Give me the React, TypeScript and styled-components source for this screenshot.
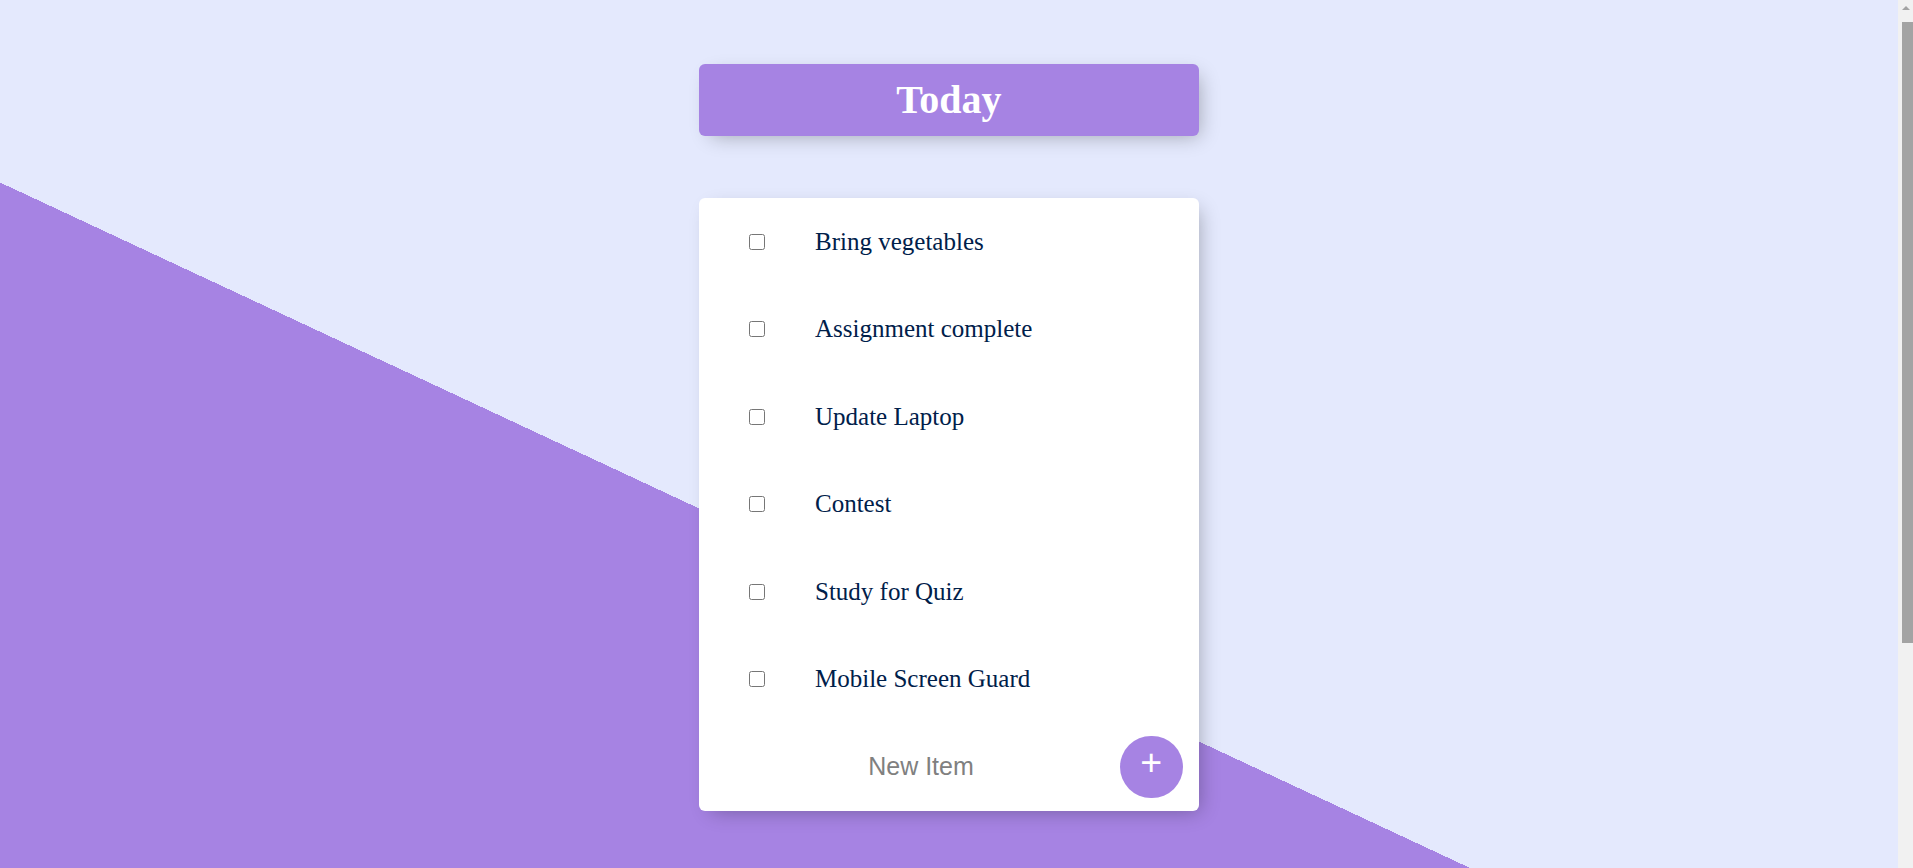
import React from 'react';
import styled, { createGlobalStyle } from 'styled-components';

const colors = {
    purple: '#A683E3',
    light: '#E4E9FD',
    ink: '#00204a',
    track: '#f1f1f1',
    thumb: '#a3a3a3',
};

const GlobalStyle = createGlobalStyle`
    html, body {
        margin: 0;
        padding: 0;
    }
    body {
        background: ${colors.light};
        padding-right: 15px;
    }
`;

const Page = styled.div`
    min-height: 1250px;
    display: flex;
    flex-direction: column;
    align-items: center;
    padding-top: 64px;
    box-sizing: border-box;
    background-image: linear-gradient(25deg, ${colors.purple} 50%, ${colors.light} 50%);
`;

const ScrollTrack = styled.div`
    position: fixed;
    top: 0;
    right: 0;
    width: 15px;
    height: 100vh;
    background: ${colors.track};
    display: flex;
    flex-direction: column;
    align-items: center;
`;

const ScrollArrow = styled.div`
    margin-top: 6px;
    width: 0;
    height: 0;
    border-left: 4px solid transparent;
    border-right: 4px solid transparent;
    border-bottom: 4px solid ${colors.thumb};
`;

const ScrollThumb = styled.div`
    margin: 12px 0 0 4px;
    width: 11px;
    height: 621px;
    background: ${colors.thumb};
`;

const Box = styled.div`
    width: 500px;
    background: #fff;
    border-radius: 6px;
    box-shadow: 6px 6px 19px -6px rgba(0, 0, 0, 0.3);
`;

const Heading = styled(Box)`
    background: ${colors.purple};
`;

const Title = styled.h1`
    margin: 0;
    height: 71.5px;
    line-height: 71.5px;
    text-align: center;
    color: #fff;
    font-family: 'Liberation Serif', 'Times New Roman', serif;
    font-weight: 700;
    font-size: 40px;
`;

const List = styled(Box)`
    margin-top: 62.5px;
`;

const Item = styled.div`
    height: 87.5px;
    display: flex;
    align-items: center;
`;

const Check = styled.input`
    width: 16px;
    height: 16px;
    margin: 0 25px 0 50px;
`;

const Label = styled.p`
    margin: 0;
    padding: 0 25px;
    font-family: 'Liberation Serif', 'Times New Roman', serif;
    font-size: 25px;
    color: ${colors.ink};
`;

const NewItem = styled.input`
    width: 380px;
    height: 75px;
    margin-left: 32px;
    padding: 0;
    border: none;
    outline: none;
    text-align: center;
    font-family: 'Liberation Sans', Arial, sans-serif;
    font-size: 25px;
    color: ${colors.ink};
    &::placeholder {
        color: grey;
        opacity: 1;
    }
`;

const AddButton = styled.button`
    width: 62.5px;
    height: 62.5px;
    margin-left: 9px;
    padding: 0 0 8px;
    border: 0;
    border-radius: 50%;
    background: ${colors.purple};
    color: #fff;
    font-family: 'Liberation Sans', Arial, sans-serif;
    font-size: 37.5px;
    line-height: 1;
`;

const items = [
    'Bring vegetables',
    'Assignment complete',
    'Update Laptop',
    'Contest',
    'Study for Quiz',
    'Mobile Screen Guard',
];

export default function App() {
    return (
        <>
            <GlobalStyle />
            <Page>
                <Heading>
                    <Title>Today</Title>
                </Heading>
                <List>
                    {items.map((item) => (
                        <Item key={item}>
                            <Check type="checkbox" />
                            <Label>{item}</Label>
                        </Item>
                    ))}
                    <Item as="form" onSubmit={(e: React.FormEvent) => e.preventDefault()}>
                        <NewItem type="text" placeholder="New Item" autoComplete="off" />
                        <AddButton type="submit">+</AddButton>
                    </Item>
                </List>
            </Page>
            <ScrollTrack>
                <ScrollArrow />
                <ScrollThumb />
            </ScrollTrack>
        </>
    );
}
